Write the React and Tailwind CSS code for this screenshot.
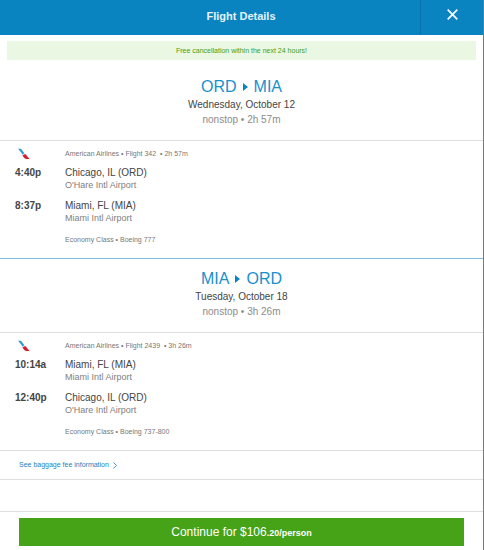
import React from "react";

const trips = [
  {
    from: "ORD",
    to: "MIA",
    date: "Wednesday, October 12",
    summary: "nonstop • 2h 57m",
    flight: "American Airlines • Flight 342  • 2h 57m",
    aircraft: "Economy Class • Boeing 777",
    stops: [
      { time: "4:40p", city: "Chicago, IL (ORD)", airport: "O'Hare Intl Airport" },
      { time: "8:37p", city: "Miami, FL (MIA)", airport: "Miami Intl Airport" },
    ],
  },
  {
    from: "MIA",
    to: "ORD",
    date: "Tuesday, October 18",
    summary: "nonstop • 3h 26m",
    flight: "American Airlines • Flight 2439  • 3h 26m",
    aircraft: "Economy Class • Boeing 737-800",
    stops: [
      { time: "10:14a", city: "Miami, FL (MIA)", airport: "Miami Intl Airport" },
      { time: "12:40p", city: "Chicago, IL (ORD)", airport: "O'Hare Intl Airport" },
    ],
  },
];

const AirlineLogo = () => (
  <svg className="w-3 h-3" viewBox="0 0 12 12" aria-hidden="true">
    <path d="M0 0.4 L3.2 1 L6.4 5.2 L4.6 6.4 Z" fill="#2b9bd6" />
    <path d="M4.6 6.4 L6.4 5.2 L7.2 6 L5.2 7.4 Z" fill="#c9d3da" />
    <path d="M4.4 7.6 L7.4 6 L11.6 11 L8 11 Q6 10.4 4.4 7.6 Z" fill="#d3222f" />
  </svg>
);

const Header = () => (
  <header className="flex h-[35px] bg-[#0a84c1] text-white">
    <div className="w-[62px]" />
    <h1 className="flex-1 text-center text-[11px] leading-8 font-bold text-[#e4f3fb]">
      Flight Details
    </h1>
    <button
      type="button"
      aria-label="Close"
      className="flex w-[63px] justify-center border-l border-[#0871ac] pt-[9px]"
    >
      <svg className="w-[11px] h-[11px]" viewBox="0 0 11 11" aria-hidden="true">
        <path d="M0.7 0.7 L10.3 10.3 M10.3 0.7 L0.7 10.3" stroke="#f0f9fd" strokeWidth="1.8" />
      </svg>
    </button>
  </header>
);

const TripHeading = ({ trip }) => (
  <div className="border-b border-[#dedede] pt-[10px] pb-[13px] text-center">
    <h2 className="flex items-center justify-center gap-[6px] text-base leading-5 text-[#1a8fcd]">
      {trip.from}
      <svg className="w-[5px] h-2" viewBox="0 0 5 8" aria-hidden="true">
        <path d="M0 0 L5 4 L0 8 Z" fill="#0a84c1" />
      </svg>
      {trip.to}
    </h2>
    <p className="text-[10px] leading-[15px] text-[#444444]">{trip.date}</p>
    <p className="text-[10px] leading-[15px] text-[#8c8c8c]">{trip.summary}</p>
  </div>
);

const TripDetails = ({ trip }) => (
  <div className="pt-[7px] pb-3">
    <div className="flex">
      <div className="w-[65px] pl-[18px]">
        <AirlineLogo />
      </div>
      <p className="flex-1 whitespace-pre text-[7px] leading-3 text-[#777777]">{trip.flight}</p>
    </div>
    <div className="mt-[7px] flex flex-col gap-[9px]">
      {trip.stops.map((stop) => (
        <div key={stop.time} className="flex">
          <p className="w-[65px] pl-[15px] text-[10px] leading-3 font-bold text-[#444444]">
            {stop.time}
          </p>
          <div className="flex-1">
            <p className="text-[10px] leading-3 text-[#444444]">{stop.city}</p>
            <p className="text-[9px] leading-3 text-[#808080]">{stop.airport}</p>
          </div>
        </div>
      ))}
    </div>
    <p className="mt-[10px] pl-[65px] text-[7px] leading-3 text-[#777777]">{trip.aircraft}</p>
  </div>
);

const App = () => {
  return (
    <div className="min-h-screen border-r border-[#777777] bg-white font-['Liberation_Sans',Arial,sans-serif]">
      <Header />

      <p className="mx-[7px] mt-[6px] mb-[7px] bg-[#e9f7e3] text-center text-[7px] leading-[19px] text-[#45a018]">
        Free cancellation within the next 24 hours!
      </p>

      <main className="divide-y divide-[#7dbfdf]">
        {trips.map((trip) => (
          <section key={trip.from}>
            <TripHeading trip={trip} />
            <TripDetails trip={trip} />
          </section>
        ))}
      </main>

      <div className="border-y border-[#dedede] px-[19px]">
        <a
          href="#baggage"
          className="inline-flex items-center gap-1 align-top text-[7px] leading-7 text-[#1a84bd]"
        >
          See baggage fee information
          <svg className="w-1 h-2" viewBox="0 0 4 8" aria-hidden="true">
            <path d="M0.5 1.5 L3.5 4.5 L0.5 7.5" fill="none" stroke="#1a84bd" strokeWidth="0.8" />
          </svg>
        </a>
      </div>

      <footer className="mt-[31px] border-t border-[#dedede] px-[19px] pt-[6px]">
        <button type="button" className="h-7 w-full bg-[#46a216] text-xs text-white">
          Continue for $106<span className="text-[9px] font-bold">.20/person</span>
        </button>
      </footer>
    </div>
  );
};

export default App;
